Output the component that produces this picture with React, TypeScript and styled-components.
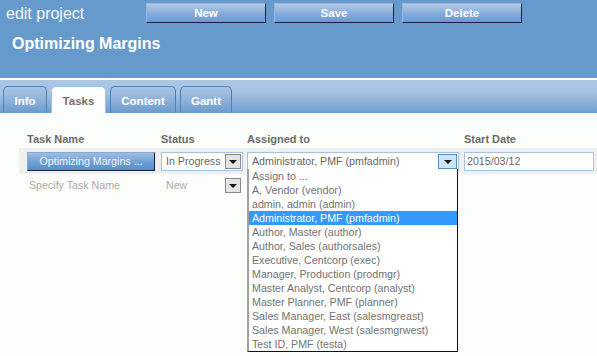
import styled, { createGlobalStyle } from "styled-components";

const Global = createGlobalStyle`
	body {
		margin: 0;
		background: #fbfdfb;
		font-family: "Liberation Sans", Arial, sans-serif;
	}
`;

const Page = styled.div`
	width: 597px;
	height: 356px;
	overflow: hidden;
	background: #fbfdfb;
`;

const Header = styled.div`
	background: #6699cc;
	height: 78px;
	border-bottom: 2px solid #ffffff;
	box-sizing: content-box;
`;

const TopBar = styled.div`
	display: flex;
	align-items: flex-start;
	padding-top: 3px;
`;

const PageLabel = styled.div`
	width: 140px;
	padding-left: 6px;
	font-size: 16px;
	line-height: 20px;
	color: #f4f8fc;
	margin-top: 1px;
`;

const ActionButton = styled.button`
	width: 120px;
	height: 20px;
	margin-right: 8px;
	padding: 0;
	border: 1px solid;
	border-color: #9db4d8 #1a2044 #1a2044 #9db4d8;
	background: linear-gradient(#b2cbe8, #85aad8 55%, #6a9ad0);
	color: #ffffff;
	font-family: "Liberation Sans", Arial, sans-serif;
	font-weight: bold;
	font-size: 11.5px;
	cursor: pointer;
`;

const ProjectTitle = styled.h1`
	margin: 9px 0 0 12px;
	font-size: 16px;
	line-height: 22px;
	color: #ffffff;
`;

const TabStrip = styled.div`
	height: 33px;
	background: linear-gradient(#adc6e5, #a6c1e2 40%, #6d9fd0);
	display: flex;
	align-items: flex-end;
	gap: 4px;
	padding-left: 3px;
`;

const Tab = styled.div<{ $active?: boolean }>`
	height: 27px;
	padding: 2px 0 0;
	box-sizing: border-box;
	flex: none;
	border: 1px solid ${(p) => (p.$active ? "#8cc8f0" : "#4a82b6")};
	border-bottom: none;
	border-radius: 5px 5px 0 0;
	background: ${(p) =>
		p.$active ? "#ffffff" : "linear-gradient(#aac4e4, #8fb2da 50%, #6a9bcd)"};
	color: ${(p) => (p.$active ? "#7a6e66" : "#ffffff")};
	font-weight: bold;
	font-size: 11.5px;
	display: flex;
	align-items: center;
	justify-content: center;
`;

const Content = styled.div`
	padding-top: 19px;
`;

const Grid = styled.div`
	display: grid;
	grid-template-columns: 134px 86px 217px 130px;
	padding-left: 27px;
`;

const ColHead = styled.div`
	font-size: 11px;
	font-weight: bold;
	color: #6b6b6b;
	line-height: 14px;
	padding-bottom: 2px;
`;

const RowBand = styled.div`
	grid-column: 1 / -1;
	display: grid;
	grid-template-columns: subgrid;
	align-items: center;
	background: #f0f0f0;
	margin-left: -8px;
	padding-left: 8px;
	margin-right: -40px;
	height: 26px;
`;

const PlainRow = styled.div`
	grid-column: 1 / -1;
	display: grid;
	grid-template-columns: subgrid;
	align-items: center;
	height: 22px;
`;

const TaskButton = styled.div`
	width: 128px;
	height: 19px;
	box-sizing: border-box;
	border: 1px solid;
	border-color: #8aa8d0 #1a2044 #1a2044 #8aa8d0;
	background: linear-gradient(#9dbde4, #6f9fd4 55%, #5a8cc6);
	color: #f0f4fa;
	font-size: 8pt;
	line-height: 17px;
	text-align: center;
`;

const SelectBox = styled.div<{ $width: number; $plain?: boolean }>`
	width: ${(p) => p.$width}px;
	height: 19px;
	box-sizing: border-box;
	border: 1px solid ${(p) => (p.$plain ? "transparent" : "#a4c4e2")};
	background: ${(p) => (p.$plain ? "transparent" : "#ffffff")};
	display: flex;
	align-items: center;
	justify-content: space-between;
	padding-left: 4px;
	font-size: 8pt;
	white-space: nowrap;
	color: ${(p) => (p.$plain ? "#aaaaaa" : "#666666")};
	position: relative;
`;

const ArrowButton = styled.div<{ $hot?: boolean }>`
	flex: none;
	width: ${(p) => (p.$hot ? 19 : 16)}px;
	height: 15px;
	margin-right: 1px;
	box-sizing: border-box;
	border: 1px solid ${(p) => (p.$hot ? "#5a8cc0" : "#8a8a8a")};
	background: ${(p) => (p.$hot ? "#cfe4f7" : "#e4e4e4")};
	display: flex;
	align-items: center;
	justify-content: center;
	&::after {
		content: "";
		border-left: 4px solid transparent;
		border-right: 4px solid transparent;
		border-top: 4px solid #111111;
		margin-top: 2px;
	}
`;

const DateInput = styled.div`
	width: 130px;
	height: 19px;
	box-sizing: border-box;
	border: 1px solid #a4c4e2;
	background: #ffffff;
	font-size: 8pt;
	line-height: 17px;
	padding-left: 2px;
	color: #666666;
`;

const Muted = styled.div<{ $indent?: number }>`
	font-size: 8pt;
	color: #aaaaaa;
	padding-left: ${(p) => p.$indent ?? 0}px;
`;

const DropList = styled.ul`
	position: absolute;
	top: 16px;
	left: -1px;
	width: 211px;
	margin: 0;
	padding: 0;
	list-style: none;
	box-sizing: border-box;
	background: #ffffff;
	border-left: 2px solid #a0a0a0;
	border-right: 1px solid #111111;
	border-bottom: 1px solid #111111;
	z-index: 5;
`;

const Option = styled.li<{ $selected?: boolean }>`
	height: 14px;
	line-height: 14px;
	padding-left: 3px;
	font-size: 8pt;
	white-space: nowrap;
	color: ${(p) => (p.$selected ? "#ffffff" : "#727272")};
	background: ${(p) => (p.$selected ? "#3399ff" : "transparent")};
`;

const users = [
	"Assign to ...",
	"A, Vendor (vendor)",
	"admin, admin (admin)",
	"Administrator, PMF (pmfadmin)",
	"Author, Master (author)",
	"Author, Sales (authorsales)",
	"Executive, Centcorp (exec)",
	"Manager, Production (prodmgr)",
	"Master Analyst, Centcorp (analyst)",
	"Master Planner, PMF (planner)",
	"Sales Manager, East (salesmgreast)",
	"Sales Manager, West (salesmgrwest)",
	"Test ID, PMF (testa)",
];

const tabs = [
	{ label: "Info", width: 44 },
	{ label: "Tasks", width: 55, active: true },
	{ label: "Content", width: 66 },
	{ label: "Gantt", width: 52 },
];

export default function App() {
	return (
		<Page>
			<Global />
			<Header>
				<TopBar>
					<PageLabel>edit project</PageLabel>
					<ActionButton>New</ActionButton>
					<ActionButton>Save</ActionButton>
					<ActionButton>Delete</ActionButton>
				</TopBar>
				<ProjectTitle>Optimizing Margins</ProjectTitle>
			</Header>
			<TabStrip>
				{tabs.map((t) => (
					<Tab key={t.label} $active={t.active} style={{ width: t.width }}>
						{t.label}
					</Tab>
				))}
			</TabStrip>
			<Content>
				<Grid>
					<ColHead>Task Name</ColHead>
					<ColHead>Status</ColHead>
					<ColHead>Assigned to</ColHead>
					<ColHead>Start Date</ColHead>
					<RowBand>
						<TaskButton>Optimizing Margins ...</TaskButton>
						<SelectBox $width={82}>
							In Progress
							<ArrowButton />
						</SelectBox>
						<SelectBox $width={212}>
							Administrator, PMF (pmfadmin)
							<ArrowButton $hot />
							<DropList>
								{users.map((u) => (
									<Option key={u} $selected={u.startsWith("Administrator")}>
										{u}
									</Option>
								))}
							</DropList>
						</SelectBox>
						<DateInput>2015/03/12</DateInput>
					</RowBand>
					<PlainRow>
						<Muted $indent={2}>Specify Task Name</Muted>
						<SelectBox $width={82} $plain>
							New
							<ArrowButton />
						</SelectBox>
						<div />
						<div />
					</PlainRow>
				</Grid>
			</Content>
		</Page>
	);
}
